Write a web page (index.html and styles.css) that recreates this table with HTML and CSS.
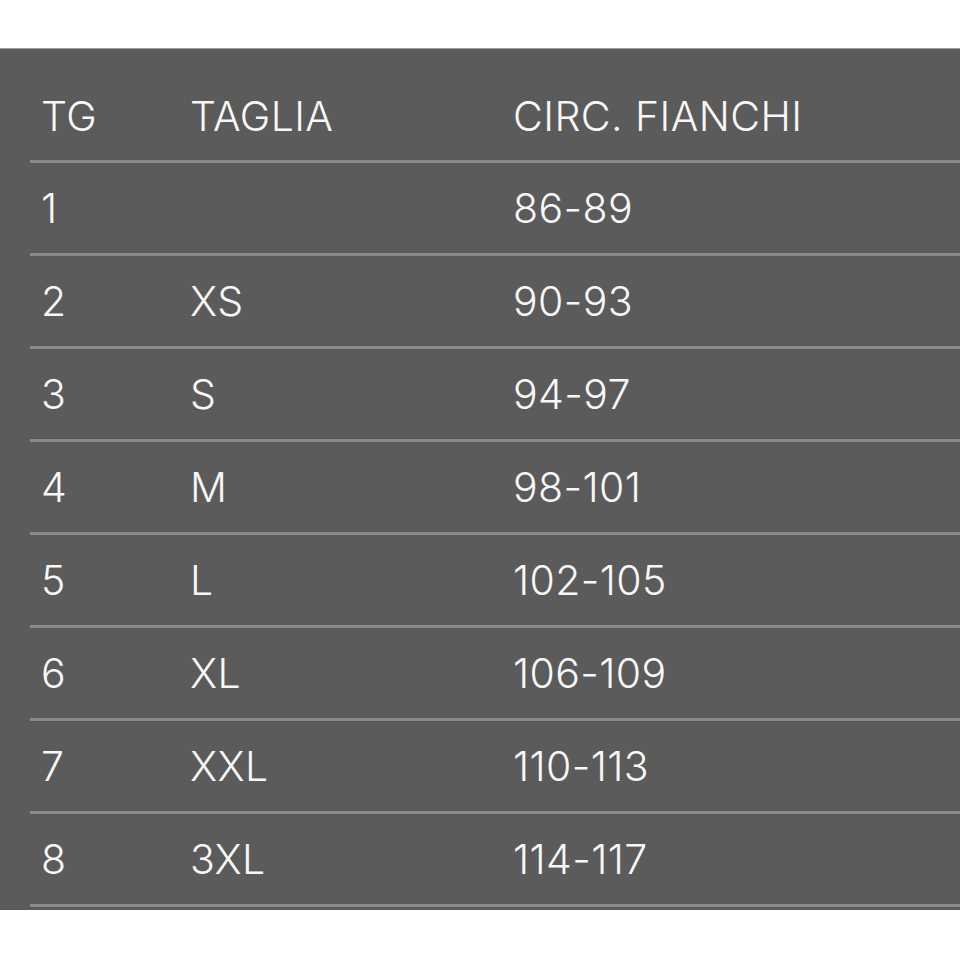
FILE: index.html
```html
<!DOCTYPE html>
<html lang="it">
<head>
<meta charset="utf-8">
<title>Tabella taglie</title>
<link rel="stylesheet" href="styles.css">
</head>
<body>
<div class="top-space"></div>
<div class="panel">
  <div class="row head">
    <div class="cell">TG</div>
    <div class="cell">TAGLIA</div>
    <div class="cell">CIRC. FIANCHI</div>
  </div>
  <div class="row"><div class="cell">1</div><div class="cell"></div><div class="cell">86-89</div></div>
  <div class="row"><div class="cell">2</div><div class="cell">XS</div><div class="cell">90-93</div></div>
  <div class="row"><div class="cell">3</div><div class="cell">S</div><div class="cell">94-97</div></div>
  <div class="row"><div class="cell">4</div><div class="cell">M</div><div class="cell">98-101</div></div>
  <div class="row"><div class="cell">5</div><div class="cell">L</div><div class="cell">102-105</div></div>
  <div class="row"><div class="cell">6</div><div class="cell">XL</div><div class="cell">106-109</div></div>
  <div class="row"><div class="cell">7</div><div class="cell">XXL</div><div class="cell">110-113</div></div>
  <div class="row"><div class="cell">8</div><div class="cell">3XL</div><div class="cell">114-117</div></div>
</div>
</body>
</html>
```
FILE: styles.css
```css
html, body {
  margin: 0;
  padding: 0;
  background: #ffffff;
}
body {
  width: 960px;
  height: 960px;
  overflow: hidden;
  font-family: Inter, Roboto, "Liberation Sans", sans-serif;
}
.top-space {
  height: 48px;
}
.panel {
  background: #5b5b5b;
  border-top: 1px solid #9c9c9c;
  padding: 0 0 3px 30px;
}
.row {
  display: grid;
  grid-template-columns: 149px 323px 1fr;
  align-items: center;
  height: 90px;
  padding-left: 11px;
  border-bottom: 3px solid #8a8a8a;
  color: #f7f7f7;
  font-size: 41px;
  font-weight: 350;
  letter-spacing: 0.4px;
  line-height: 48px;
}
.row.head {
  height: 89px;
  padding-top: 22px;
}
.cell {
  white-space: nowrap;
}
```
